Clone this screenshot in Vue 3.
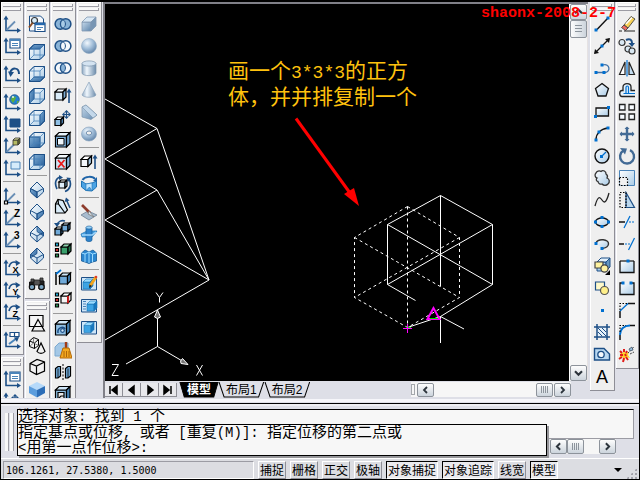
<script setup>
import { ref } from 'vue'

const NAVY = '#1d4f86'
const MID = '#4a84ba'
const BLUE = '#0070d0'

const p = (d, fill = 'none', stroke = '#000', w = 1.2, extra = '') =>
  `<path d="${d}" fill="${fill}" stroke="${stroke}" stroke-width="${w}" ${extra}/>`
const c = (x, y, r, fill = 'none', stroke = '#000', w = 1.2) =>
  `<circle cx="${x}" cy="${y}" r="${r}" fill="${fill}" stroke="${stroke}" stroke-width="${w}"/>`
const e = (x, y, rx, ry, fill = 'none', stroke = '#000', w = 1.2) =>
  `<ellipse cx="${x}" cy="${y}" rx="${rx}" ry="${ry}" fill="${fill}" stroke="${stroke}" stroke-width="${w}"/>`
const dot = (x, y) => `<rect x="${x - 1.5}" y="${y - 1.5}" width="3" height="3" fill="${BLUE}"/>`

// UCS tripod shared by the first column
const axes =
  p('M3 3V15.500H15', 'none', NAVY, 1.6) +
  p('M.5 4.5L3 .5L5.500 4.500ZM14 13L18 15.500L14 18Z', NAVY, 'none')
const ray = p('M3.500 15L12 6.500', 'none', '#6a8fb5', 1.8)

function cube(x, y, s, d, front, top, side, stroke = '#000', w = 1.2) {
  return (
    p(`M${x} ${y + d}h${s}v${s}h${-s}z`, front, stroke, w) +
    p(`M${x} ${y + d}l${d} ${-d}h${s}l${-d} ${d}z`, top, stroke, w) +
    p(`M${x + s} ${y + d}l${d} ${-d}v${s}l${-d} ${d}z`, side, stroke, w)
  )
}

const wire = (face) =>
  p('M1.500 6L6 1.500H16.500V12L12 16.500H1.500Z', 'url(#glass)', MID, 1) +
  p(face, 'url(#deep)', NAVY, 1) +
  p('M1.500 6H12V16.500M12 6L16.500 1.500M6 1.500V12H16.500M6 12L1.500 16.500', 'none', MID, 0.8) +
  p('M1.500 6L6 1.500H16.500V12L12 16.500H1.500Z', 'none', NAVY, 1)

const iso = (face) =>
  p('M9 1L15.500 7.500V11L9 17L2.500 11V7.500Z', 'url(#glass)', NAVY, 1) +
  p(face, 'url(#deep)', NAVY, 0.8) +
  p('M2.500 7.500L9 11L15.500 7.500M9 11V17', 'none', NAVY, 1)

const swatches =
  p('M1.500 2h3v3h-3z', '#20b8e8') + p('M1.500 7.500h3v3h-3z', '#e03030') + p('M1.500 13h3v3h-3z', '#30a060')
const letter = (t) => `<text x="11" y="8" font-family="Liberation Sans" font-size="10" font-weight="bold">${t}</text>`
const small = (t) => `<text x="9.500" y="13.500" font-family="Liberation Sans" font-size="9" font-weight="bold">${t}</text>`
const turn = p('M6 8C7 3 11 2 14 4', 'none', NAVY, 1.6) + p('M12.500 1L17.500 4L13 7Z', NAVY, 'none')
const venn = (l, r, m) =>
  c(6.3, 9, 5.2, l, NAVY, 1.5) + c(11.7, 9, 5.2, r, NAVY, 1.5) +
  p('M9 4.600A5.200 5.200 0 0 1 9 13.400A5.200 5.200 0 0 1 9 4.600', m, NAVY, 1)
const cross4 = (x, y, r, w, col) =>
  p(`M${x - r} ${y}H${x + r}M${x} ${y - r}V${y + r}`, 'none', col, w) +
  p(
    `M${x - r - 1} ${y}l2.500 -2.500v5zM${x + r + 1} ${y}l-2.500 -2.500v5zM${x} ${y - r - 1}l-2.500 2.500h5zM${x} ${y + r + 1}l-2.500 -2.500h5z`,
    col, 'none'
  )
const frame = p('M1.500 2.500h15v12.500h-15z', '#cfe6f8', NAVY, 1)
const aqua = (x, y, s, d) => cube(x, y, s, d, '#3da4e4', '#9bdcff', '#1878c0', '#1873b4', 0.6)

const icons = {
  ucs: axes + ray,
  named: axes + p('M7 2h10v9H7z', '#fff', NAVY) + p('M7 3H17', 'none', MID, 2) + p('M9 6.500h6M9 8.500h6', 'none', MID, 1),
  prev: axes + p('M7 8C9 2 16 2 16 9', 'none', NAVY, 2) + p('M5 6.500L11 7L7.500 12Z', NAVY, 'none'),
  world: axes + c(11.5, 6.5, 4.8, '#2482cc', NAVY, 0.8) + p('M9 3l4 1l-1 3l-2 3l-2-3zM14 8l2 0l-2 3z', '#5fae3c', 'none') + c(10, 4, 1, '#e8f6ff', 'none'),
  object: axes + p('M7 4h10v8H7z', NAVY, NAVY, 1),
  face: axes + ray + cube(10, 1, 5, 2, '#b4ba63', '#e0e29a', '#6c7130', '#333', 0.8),
  view: axes + p('M8 3h9v7H8z', '#d5ebfb', MID, 1),
  origin: axes + ray + p('M1.500 14h3v3h-3z', '#fff'),
  zaxis: axes + ray + letter('Z'),
  three: axes + ray + letter('3'),
  rx: axes + turn + small('X'),
  ry: axes + turn + small('Y'),
  rz: axes + turn + small('Z'),
  apply: axes + p('M7 1.500h9v4H7zM11.500 1.500v4', '#fff', NAVY, 1.2) + p('M6 13L14 7', 'none', MID, 2) + p('M11 6.500L16 6L14 11Z', NAVY, 'none'),
  moveucs: axes + cross4(12, 6, 3, 1.2, NAVY),

  viewmgr: p('M1.500 1h11l3 3v12h-14z', '#f3f7fc', NAVY, 1) + c(6.5, 5.5, 3, '#d7ecfb', '#333') + p('M4.500 8L1 12.500', 'none', '#8b4b22', 2) + p('M7 8h10v8.500H7z', '#fff', NAVY) + p('M7 9H17', 'none', '#2467ac', 2.4) + p('M9 12.500h6M9 14.500h4', 'none', MID, 1),
  top: wire('M1.500 6L6 1.500H16.500L12 6Z'),
  bottom: wire('M1.500 16.500L6 12H16.500L12 16.500Z'),
  left: wire('M1.500 6L6 1.500V12L1.500 16.500Z'),
  right: wire('M12 6L16.500 1.500V12L12 16.500Z'),
  front: wire('M1.500 6H12V16.500H1.500Z'),
  back: wire('M6 1.500H16.500V12H6Z'),
  sw: iso('M2.500 7.500L9 11V17L2.500 11Z'),
  se: iso('M15.500 7.500L9 11V17L15.500 11Z'),
  ne: iso('M9 1L15.500 7.500V11L9 6.500Z'),
  nw: iso('M9 1L2.500 7.500V11L9 6.500Z'),
  camera: p('M1.500 7h5v7h-5zM11 6h5v8h-5z', '#222', '#111', 1) + p('M6 5h6v5H6zM3 4h3v3H3zM12 3h3v3h-3z', '#555', '#222', 0.8) + c(4, 12, 2.7, '#7ca6c4', '#111') + c(13.5, 12, 2.7, '#7ca6c4', '#111'),
  wire2d: p('M1.500 1.500h13.500v11H1.500z', '#f6f6f6') + p('M10 5.500L16.500 17H4Z'),
  wire3d: p('M1.500 5l4-3.500l5 2v6l-4 3l-5-2zM1.500 5l5 2l4-3.500M6.500 7v5.500', 'none', '#000', 1) + p('M5.500 1.500v5.500l-4 3.500M5.500 7l5 2.500', 'none', '#555', 0.7) + p('M13 7L9 15.500C11 18 15 18 17 15.500Z', '#f2f2f2'),
  hidden: p('M2 5.500L9 1.500L16.500 4V13L8.500 16.500L2 13ZM2 5.500L8.500 8L16.500 4M8.500 8V16.500', '#f2f2f2'),
  shaded: p('M1 6L9 2L17 6L9 10Z', '#b6dafa', 'none') + p('M1 6L9 10V17.500L1 13Z', '#5b9ddd', 'none') + p('M17 6L9 10V17.500L17 13Z', '#2d6eb7', 'none'),

  union: venn('#8ab4d8', '#8ab4d8', '#a8cbe6'),
  subtract: venn('#8ab4d8', '#f4f8fc', '#f4f8fc'),
  intersect: venn('#f4f8fc', '#f4f8fc', '#8ab4d8'),
  extface: cube(1, 2, 8, 3, '#d9ebf8', '#f5faff', '#7dadd4') + p('M15 16V4', 'none', NAVY, 1.6) + p('M12.500 5.500L15 1.500L17.500 5.500Z', NAVY, 'none'),
  movface: cube(1, 8, 6, 2.5, '#8fbfe4', '#f5faff', '#5088b8') + cross4(12.5, 5.5, 3.5, 1.2, NAVY),
  offface: cube(1.5, 1.5, 11, 3.5, '#7fb0da', '#e8f4fc', '#6fa1cb') + p('M3.500 7.500h6.500v6.500H3.500z', '#eef6fc', '#000', 1),
  delface: cube(1.5, 1.5, 11, 3.5, '#cfe3f2', '#f3f9fd', '#83b0d4') + p('M4 7L10.500 14.500M10.500 7L4 14.500', 'none', '#e81818', 1.8),
  rotface: cube(5, 5, 6, 2, '#dfeefa', '#fff', '#8fbfe4') + p('M3 14C0 8 2 3 6 2M15 4C18 9 16 15 11 16.500', 'none', NAVY, 1.7) + p('M5 0L9 2.500L5 5ZM17 3L12.500 2.500L14 7Z', NAVY, 'none'),
  tapface: p('M1.500 16V7L4 2.500L9 3.500L13.500 13L11 16Z', '#d9ebf8') + p('M4 2.500L4.500 7L11 16M1.500 7H4.500') + p('M16 11L12.500 3', 'none', NAVY, 1.6) + p('M10.500 5L12 .5L15.500 3.500Z', NAVY, 'none'),
  copface: cube(1, 8, 6, 2, '#6fa9d8', '#fff', '#4380b3') + cube(8, 4, 6, 2, '#6fa9d8', '#cfe6f8', '#4380b3') + p('M3 6C4 2 8 1 11 2', 'none', NAVY, 1.6) + p('M0 4L3 8L6 4Z', NAVY, 'none'),
  colface: swatches + cube(7, 3, 7, 3, '#39a06c', '#8cd0ad', '#207348'),
  copedge: p('M2 3V16', 'none', '#000', 1.5) + p('M2 5L7 1', 'none', BLUE, 1.8) + cube(5.5, 4, 8, 3, '#6fa9d8', '#cfe6f8', '#4380b3'),
  coledge: swatches + cube(7, 2, 7, 3, '#f4f4f4', '#fff', '#e4e4e4') + p('M14 5V12', 'none', '#e81818', 1.6),
  imprint: cube(1.5, 1.5, 11, 3.5, '#8fbfe4', '#cfe6f8', '#4380b3') + p('M4 14C3 8 10 7 11 10', 'none', NAVY, 1.5) + c(8.5, 11.5, 1.8, '#cfe6f8', NAVY),
  clean: p('M1 6L5 2H14V15H1Z', '#a4c8e6', '#7ca9cf', 1) + p('M12 1v7', 'none', '#a23c16', 2.4) + p('M9 7h6l3 10H6Z', '#f3a820', '#b36808', 1) + p('M10 10v6M12.500 10v6M15 10v6', 'none', '#9b5604', 0.8),
  separate: p('M1.500 5.500L4 3.500H6.500V13L4 15H1.500ZM11.500 5.500L14 3.500H16.500V13L14 15H11.500Z', '#73addc') + p('M4 5.500V15M14 5.500V15', 'none', '#000', 0.8) + p('M9 1V17', 'none', '#000', 1, 'stroke-dasharray="2 1.500"'),
  shell: cube(1.5, 1.5, 11, 3.5, '#8fbfe4', '#cfe6f8', '#4380b3') + p('M4 7.500h6V14H4z', '#e8e8e8') + p('M4 14l3-3h3', 'none'),

  box: cube(2, 2, 9, 5, 'url(#steel)', '#d8e7f4', '#7896b4', '#8198b1', 0.8),
  sphere: c(9, 9, 7.5, 'url(#ball)', '#8fa9c2', 0.6),
  cylinder: p('M2 4.500V14C2 17.500 16 17.500 16 14V4.500Z', 'url(#tube)', '#7d95ad', 0.7) + e(9, 4.500, 7, 2.6, '#d4e3f1', '#7d95ad', 0.7),
  cone: p('M9 1L2 14C4 17 14 17 16 14Z', 'url(#tube)', '#8aa2ba', 0.7),
  wedge: p('M2 4L6 2L17 12L11 16.500L2 14Z', 'url(#steel)', '#7b93ab', 0.7) + p('M6 2L17 12L13 15L2 4Z', '#c4d8ea', '#7b93ab', 0.6),
  torus: e(9, 9, 7.5, 7, 'url(#ball)', '#8ba5be', 0.7) + e(9, 8, 2.8, 2, '#efefef', '#6787a8', 0.9),
  extrude: cube(1, 3, 7, 3.5, '#f3f7fb', '#fff', '#a4c8e6') + p('M15 16V4', 'none', NAVY, 1.6) + p('M12.500 5.500L15 1.500L17.500 5.500Z', NAVY, 'none'),
  revolve: p('M1.500 6L6 9L12 8L16.500 6V12L12 16L6 15.500L1.500 12Z', '#4ba3e4', '#1e72b4', 1) + p('M6 9V15.500L9.500 12L12 16V8Z', '#c2e6ff', '#1e72b4', 0.6) + p('M2.500 5C5 1 13 1 15 4', 'none', '#1e64a8', 2) + p('M13 6L17 6.500L17 2Z', '#1e64a8', 'none'),
  slice: p('M1 12L8 8L17 12L9 17Z', '#a8bccf', '#6f8294', 0.8) + p('M2 2L10 10', 'none', '#8e3c2c', 2.6) + p('M9 8L14 14L8 11Z', '#e3e8ec', '#777', 0.8),
  section: p('M1 9L7 6H17L12 12H2Z', '#4ba3e4', '#1e72b4', 0.7) + p('M6 2.500V15C6 17 12 17 12 15V2.500Z', '#2d83cc', '#195b97', 0.7) + e(9, 2.500, 3, 1.5, '#99d4fa', '#195b97', 0.6) + p('M2 10H12L16 7', 'none', '#9fd6fb', 1.4),
  interfere: p('M1.500 6L5 3L9 5L13 3L16.500 6V14L12.500 15L9 16.500L5 15L1.500 14Z', '#2b86d0', '#155a96', 0.8) + p('M1.500 6L5 7V15M5 7L9 5V16M9 5L12.500 7V15M12.500 7L16.500 6', 'none', '#9eddff', 1),
  setdraw: frame + aqua(3, 4, 7, 3) + p('M10 11L16 2', 'none', '#f2a51d', 3) + p('M9 13L9.500 9.500L12 11Z', '#222', 'none') + c(16, 2, 1.3, '#e03c2c', 'none'),
  setview: frame + p('M3 4.500h3M3 7h3M3 9.500h3M3 12h3', 'none', MID, 1) + aqua(7, 4, 7, 3),
  setprof: frame + aqua(4, 3.5, 7, 3),

  line: p('M4 14.500L14.500 3.500', 'none', '#111', 1.4) + dot(3, 15) + dot(15, 3),
  xline: p('M2 16L16 2', 'none', '#111', 1.3) + p('M1 17L2 12L6 16ZM17 1L16 6L12 2Z', '#111', 'none') + dot(9, 9),
  pline: p('M2.500 13.500H11M10 6C17 4 18 13 12 13.500', 'none', '#3f72a8', 1.3) + dot(3, 13.5) + dot(11, 13.5) + dot(9, 6),
  polygon: p('M9 2.500L15.500 7.500L13 15H5L2.500 7.500Z', 'url(#glass)', '#111', 1.3),
  rect: p('M3 5H15.500V13H3Z', 'url(#glass)', '#111', 1.3) + dot(2.5, 13.5) + dot(15.5, 4.5),
  arc: p('M3 15C3 9 7 4 15 3', 'none', '#111', 1.4) + dot(3, 15) + dot(6, 7) + dot(15, 3),
  circle: c(9, 9, 7, 'url(#glass)', '#111', 1.4) + p('M8 10L13 5', 'none', BLUE, 1.3) + dot(8.5, 9.5),
  cloud: p('M4 9A3 3 0 0 1 3 4A3.500 3.500 0 0 1 8 2.500A3 3 0 0 1 13 5A3 3 0 0 1 14 9A3.500 3.500 0 0 1 15 15A4 4 0 0 1 9 15A3 3 0 0 1 5 12.500A2 2 0 0 1 4 9Z', 'url(#glass)', '#333', 1.3),
  spline: p('M2 15C5 4 7 6 9 9S13 13 16 2', 'none', '#222', 1.3),
  ellipse: e(9, 9, 6.5, 4, 'url(#glass)', '#111', 1.3) + dot(2.5, 9) + dot(15.5, 9) + dot(9, 4.5) + dot(9, 13.5),
  earc: p('M3 8C5 3 16 4 15.500 9C15 13 12 13 9 13.500', 'url(#glass)', '#333', 1.4) + dot(3, 8.5) + dot(9, 13.5),
  insert: cube(4, 1, 9, 4, '#a5cbe9', '#e2f0fb', '#6797c0', NAVY, 1) + p('M2 5h8v6H2z', '#fff3a0', '#444') + c(11.5, 11.5, 3.6, '#fff3a0', '#444') + p('M17 13v5h-5z', '#000', 'none'),
  block: p('M2.500 3h9v8h-9z', '#fff9c9', NAVY) + c(11.5, 11.5, 4, '#fff08a', '#555'),
  point: dot(9.5, 9.5),
  hatch: p('M4 1V17M14 1V17M1 4H17M1 14H17', 'none', NAVY, 1.5) + p('M5 5h8v8H5z', '#e6f1fa', 'none') + p('M5 9l4 4M5 5l8 8M9 5l4 4', 'none', NAVY, 1),
  region: p('M1.500 3.500H11L16.500 9V15H1.500Z', '#b9d8f1', NAVY, 1.4) + c(8, 9.5, 3.2, '#f4f8fc', NAVY, 1.3),
  text: '<text x="3" y="15.500" font-family="Liberation Sans" font-size="18" fill="#000">A</text>',

  erase: p('M6 10L13 1.500L17 4L10 13Z', '#f7d155', '#444', 0.9) + p('M6 10L10 13L7.500 15.500L3.500 12.500Z', '#ee6a5f', '#444', 0.9) + p('M8 9L14 2.500', 'none', '#fff', 1.4) + p('M1 16H4M6 16H17', 'none', '#222', 1.2),
  copy: c(4, 5.5, 3, '#d9e8f3', '#333') + c(10, 12, 3, '#d9e8f3', '#333') + c(14, 14, 3, '#d9e8f3', '#333') + p('M8 3C12 1 14 3 14 6', 'none', NAVY, 2) + p('M10.500 6H17L14 10Z', NAVY, 'none'),
  mirror: p('M7 3V15.500H1.500Z', '#fff', '#222') + p('M11 3V15.500H16.500Z', '#c3dcf0', '#222') + p('M9 1V17.500', 'none', BLUE, 1.2),
  offset: p('M17 15.500H4C1 15.500 1 9.500 4 9.500H5V6C5 1.500 13 1.500 13 6V9.500H17', '#e6f1fa', '#222', 1.3) + p('M17 12.500H5.500M8 12V6.500C8 4.500 10.500 4.500 10.500 6.500V12', 'none', BLUE, 1.2),
  array: p('M1.500 1.500h5.500v5.500h-5.500zM11 1.500h5.500v5.500H11zM1.500 11h5.500v5.500h-5.500zM11 11h5.500v5.500H11z', '#f7fbff', '#222', 1.3),
  move: cross4(9, 9, 6.5, 2.4, '#426a95'),
  rotate: p('M5.500 3.500A7 7 0 1 0 12 3.200', 'none', '#426a95', 2.4) + p('M2 1L9 1.500L7 7.500Z', '#426a95', 'none'),
  scale: p('M1.500 1.500h15v15h-15z', 'url(#glass)', MID, 1) + p('M1.500 8.500h8v8h-8z', '#f2f2f2', '#000', 1.2, 'stroke-dasharray="1.500 1.500"'),
  stretch: p('M8 1.500L16.500 16.500H8Z', '#bcd8ee', NAVY) + p('M2 1.500h6v15H2z', 'none', '#000', 1.2, 'stroke-dasharray="1.500 1.500"'),
  trim: p('M1 9H7', 'none', '#111', 1.5) + p('M6 15L12 3', 'none', BLUE, 1.2) + p('M11 9H17', 'none', BLUE, 1.2, 'stroke-dasharray="2 1"'),
  extend: p('M1 9H6', 'none', '#111', 1.5) + p('M7 9H12', 'none', BLUE, 1.2, 'stroke-dasharray="2 1"') + p('M10.500 15L16.500 3', 'none', BLUE, 1.3),
  breakpt: p('M2 4V15.500H16V4', 'url(#glass)', '#111', 1.3) + p('M2 4H16', 'none', '#111', 1.2) + dot(10, 4),
  breaks: p('M5 4H2V15.500H16V4H13', 'url(#glass)', '#111', 1.3) + dot(5, 4) + dot(13, 4),
  chamfer: p('M2 17V10M10 2.500H17', 'none', '#111', 1.5) + p('M2 10L10 2.500', 'none', BLUE, 1.4) + p('M2 9V2.500H9', 'none', '#000', 1.1, 'stroke-dasharray="1.500 1.500"'),
  fillet: p('M2 17V12M12 2.500H17', 'none', '#111', 1.5) + p('M2 12C2 6 6 2.500 12 2.500', 'none', BLUE, 1.8) + p('M2 9V2.500H8', 'none', '#000', 1.1, 'stroke-dasharray="1.500 1.500"'),
  explode: p('M2 7l3 1l1-3l2 3l3-1l-1 3l2 3l-4-1l-2 4l-1-4l-4 1l2-3z', '#ffd225', 'none') + p('M2 6l2 2M6 4v3M9 6l-1 2M2 10h3M1 14l3-2M5 17l1-4M10 15l-2-3M7 9l1 2', 'none', '#e01c1c', 2) + p('M10 8L16 2M12 9L16 7', 'none', '#444', 1, 'stroke-dasharray="2 1"') + p('M11 4l3-2l1 3l-3 1z', '#97bcd9', '#345', 0.7),
}

const bars = (s) => s.split('/').map((bar) => bar.trim().split(/\s+/))
const leftDock = [
  bars('ucs named - prev - world object face view - origin zaxis three - rx ry rz - apply / named moveucs'),
  bars('viewmgr - top bottom left right front back - sw se ne nw - camera / wire2d wire3d hidden shaded'),
  bars('union subtract intersect - extface movface offface delface rotface tapface copface colface - copedge coledge - imprint clean separate shell'),
  bars('box sphere cylinder cone wedge torus - extrude revolve - slice section interfere - setdraw setview setprof'),
]
const rightDock = [
  bars('line xline pline polygon rect arc circle cloud spline ellipse earc insert block point hatch region text'),
  bars('erase copy mirror offset array move rotate scale stretch trim extend breakpt breaks chamfer fillet explode'),
]
const docks = { left: leftDock, right: rightDock }

const arrows = {
  first: 'M5 3v8M12 3v8L7 7z',
  prev: 'M11 3v8L6 7z',
  next: 'M7 3v8l5-4z',
  last: 'M12 3v8M5 3v8l5-4z',
}
const chevrons = { up: 'M4 9.500L8 5.500L12 9.500', down: 'M4 6L8 10L12 6', left: 'M10 4L6 8L10 12', right: 'M6 4L10 8L6 12' }

const tabs = ['模型', '布局1', '布局2']
const activeTab = ref(0)

const modes = ref([
  { label: '捕捉', on: false },
  { label: '栅格', on: false },
  { label: '正交', on: false },
  { label: '极轴', on: false },
  { label: '对象捕捉', on: true },
  { label: '对象追踪', on: true },
  { label: '线宽', on: false },
  { label: '模型', on: true },
])

// Splits a line into full-width and half-width runs
const runs = (s) => s.match(/[\x20-\x7e]+|[^\x20-\x7e]+/g).map((t) => ({ t, half: /^[\x20-\x7e]/.test(t) }))
const history = runs('选择对象: 找到 1 个')
const prompt = [runs('指定基点或位移, 或者 [重复(M)]: 指定位移的第二点或'), runs('<用第一点作位移>:')]
const note = [runs('画一个3*3*3的正方'), runs('体，并并排复制一个')]
const command = ref('')
</script>

<template>
  <div class="app">
    <svg class="defs" aria-hidden="true">
      <defs>
        <linearGradient id="steel" x1="0" y1="0" x2="1" y2="1"><stop offset="0" stop-color="#c6d9ea" /><stop offset="1" stop-color="#5f86ad" /></linearGradient>
        <linearGradient id="tube"><stop offset="0" stop-color="#8fa9c3" /><stop offset=".35" stop-color="#f0f7fd" /><stop offset="1" stop-color="#6b8bab" /></linearGradient>
        <linearGradient id="glass" x1="0" y1="0" x2="1" y2="1"><stop offset="0" stop-color="#ffffff" /><stop offset="1" stop-color="#a9cbe6" /></linearGradient>
        <linearGradient id="deep" x1="0" y1="0" x2="1" y2="1"><stop offset="0" stop-color="#7fadd5" /><stop offset="1" stop-color="#2b629c" /></linearGradient>
        <radialGradient id="ball" cx=".38" cy=".3" r=".75"><stop offset="0" stop-color="#f2f8fd" /><stop offset=".5" stop-color="#a3bfda" /><stop offset="1" stop-color="#5d80a5" /></radialGradient>
      </defs>
    </svg>

    <main class="work">
      <template v-for="(columns, side) in docks" :key="side">
        <div class="dock" :class="side">
          <div v-for="(column, i) in columns" :key="i" class="column">
            <div v-for="(bar, j) in column" :key="j" class="toolbar" role="toolbar">
              <div class="grip"><i></i><i></i></div>
              <template v-for="(name, k) in bar" :key="k">
                <hr v-if="name === '-'" />
                <button v-else type="button" class="tool" :aria-label="name">
                  <svg width="18" height="18" viewBox="0 0 18 18" v-html="icons[name]"></svg>
                </button>
              </template>
            </div>
          </div>
        </div>
      </template>

      <section class="view">
        <div class="canvas">
          <svg class="drawing" aria-hidden="true">
            <g transform="translate(-105 -4)" fill="none" stroke="#fff" stroke-width="1">
              <path d="M105 99L157 128.500L105 159L157 190L209 280M157 128.500L209 280M157 190L105 220L209 280L105 340" />
              <path d="M440.500 195.500L387.500 224.500V284.500L415.500 300.500M440.500 195.500L492.500 224.500V284.500L440.500 316.500M387.500 224.500L492.500 284.500M492.500 224.500L387.500 284.500M440.500 195.500V286.500M440.500 316.500V343M440.500 316.500L464 329M440.500 316.500L407.500 327.500" />
              <path stroke-dasharray="3 3" d="M407.500 206.500L354.500 237.500V297.500L407.500 327.500M407.500 206.500L459.500 237.500V297.500L407.500 327.500M354.500 237.500L459.500 297.500M459.500 237.500L354.500 297.500M407.500 206.500V327.500" />
              <path stroke="#ff00ff" stroke-width="2" d="M433.500 308L427.500 319H439.500Z" />
              <path stroke="#00e000" d="M430 318.500H438M406 327.500H411" />
              <path stroke="#ff00ff" d="M403 328.500H412M407.500 324V333" />
              <path stroke="#ff0000" stroke-width="3" d="M296 118.500L350 193" />
              <path fill="#ff0000" stroke="none" d="M359 206L344 194L354 188Z" />
              <path d="M157.500 312V346.500L126 364M157.500 346.500L184 362" />
              <path fill="#777" d="M157.500 310L154.500 317Q157.500 320 160.500 317ZM188 364.500L181 363.500Q179.500 361 182.500 358.500Z" />
              <path d="M156 292.500L159.500 297.500L163 292.500M159.500 297.500V302.500M196.500 365L202.500 375.500M202.500 365L196.500 375.500M112 364.500H118.500L112 375.500H118.500" />
            </g>
          </svg>
          <p class="note">
            <span v-for="(line, i) in note" :key="i" class="row"><span v-for="(r, k) in line" :key="k" :class="{ half: r.half }">{{ r.t }}</span></span>
          </p>
        </div>
        <div class="vscroll">
          <button type="button" class="sb" aria-label="up"><svg viewBox="0 0 16 16"><path :d="chevrons.up" /></svg></button>
          <span class="thumb tall"></span>
          <button type="button" class="sb end" aria-label="down"><svg viewBox="0 0 16 16"><path :d="chevrons.down" /></svg></button>
        </div>
        <div class="bottom">
          <nav class="steps">
            <button v-for="(d, name) in arrows" :key="name" type="button" :aria-label="name">
              <svg width="17" height="14" viewBox="0 0 17 14"><path :d="d" stroke="#000" stroke-width="1.5" /></svg>
            </button>
          </nav>
          <div class="tabs" role="tablist">
            <button v-for="(t, i) in tabs" :key="t" type="button" role="tab" class="tab" :class="{ active: i === activeTab }" :aria-selected="i === activeTab" @click="activeTab = i">
              <svg viewBox="0 0 46 15" preserveAspectRatio="none"><path d="M1 0L6 14H40L45 0" /></svg>
              <span>{{ t }}</span>
            </button>
          </div>
          <div class="hscroll">
            <i class="split"></i>
            <button type="button" class="sb" aria-label="left"><svg viewBox="0 0 16 16"><path :d="chevrons.left" /></svg></button>
            <span class="thumb wide"></span>
            <button type="button" class="sb" aria-label="right"><svg viewBox="0 0 16 16"><path :d="chevrons.right" /></svg></button>
          </div>
        </div>
        <div class="stamp">shaonx-2008-2-7</div>
      </section>
    </main>

    <section class="command">
      <div class="grips"><i></i><i></i></div>
      <div class="console">
        <div class="history"><span v-for="(r, k) in history" :key="k" :class="{ half: r.half }">{{ r.t }}</span></div>
        <div class="console-scroll">
          <button type="button" class="sb" aria-label="left"><svg viewBox="0 0 16 16"><path :d="chevrons.left" /></svg></button>
          <span class="thumb wide"></span>
          <button type="button" class="sb end" aria-label="right"><svg viewBox="0 0 16 16"><path :d="chevrons.right" /></svg></button>
        </div>
        <label class="prompt">
          <span class="row"><span v-for="(r, k) in prompt[0]" :key="k" :class="{ half: r.half }">{{ r.t }}</span></span>
          <span class="row"><span v-for="(r, k) in prompt[1]" :key="k" :class="{ half: r.half }">{{ r.t }}</span><input v-model="command" type="text" /></span>
        </label>
      </div>
    </section>

    <footer class="status">
      <output class="coords">106.1261, 27.5380, 1.5000</output>
      <button v-for="(m, i) in modes" :key="i" type="button" class="mode" :class="{ on: m.on }" :aria-pressed="m.on" @click="m.on = !m.on">{{ m.label }}</button>
      <i class="caret"></i>
      <i class="corner"></i>
    </footer>
  </div>
</template>

<style>
body {
  margin: 0;
  background: #000;
}
</style>

<style scoped>
.app {
  box-sizing: border-box;
  height: 100vh;
  display: flex;
  flex-direction: column;
  border: 1px solid #000;
  border-top-width: 2px;
  background: #dedfe7;
  font-family: 'Liberation Sans', 'Noto Sans CJK SC', sans-serif;
  font-size: 12px;
  color: #000;
}
button {
  margin: 0;
  padding: 0;
  border: 0;
  background: none;
  font: inherit;
  color: inherit;
}
.defs {
  position: absolute;
  width: 0;
  height: 0;
}
.work {
  flex: 1 1 0;
  min-height: 0;
  display: flex;
  overflow: hidden;
}
.dock {
  display: flex;
  gap: 1px;
  flex: none;
}
.dock.left {
  order: 0;
  margin-right: 1px;
}
.dock.right {
  order: 2;
  margin-left: 2px;
}
.column {
  width: 25px;
  display: flex;
  flex-direction: column;
  gap: 2px;
}
.left .column:first-child,
.right .column:last-child {
  width: 23px;
}
.toolbar {
  box-sizing: border-box;
  flex: none;
  display: flex;
  flex-direction: column;
  padding: 0 0 3px;
  background: #efefef;
  border-right: 1px solid #8e8e96;
  border-bottom: 1px solid #8e8e96;
  box-shadow: inset 1px 1px #fff;
}
.grip {
  height: 9px;
  padding: 2px 2px 0;
  display: flex;
  flex-direction: column;
  gap: 1px;
}
.grip i {
  box-sizing: border-box;
  height: 3px;
  background: #f8f8f8;
  border-bottom: 1px solid #9c9ca4;
  border-right: 1px solid #9c9ca4;
}
.tool {
  height: 22px;
  display: flex;
  align-items: center;
  justify-content: center;
}
.tool svg {
  display: block;
  flex: none;
}
hr {
  box-sizing: border-box;
  width: 100%;
  height: 6px;
  margin: 0;
  border: 2px solid transparent;
  border-width: 2px 2px 3px;
  background: #9a9a9a;
  background-clip: padding-box;
}
.view {
  order: 1;
  flex: 1;
  min-width: 0;
  position: relative;
  display: grid;
  grid-template-columns: 1fr 19px;
  grid-template-rows: 1fr 17px;
  border-left: 2px solid #808088;
  border-top: 2px solid #808088;
}
.canvas {
  position: relative;
  overflow: hidden;
  background: #000;
}
.drawing {
  position: absolute;
  inset: 0;
  width: 100%;
  height: 100%;
}
.note {
  position: absolute;
  left: 123px;
  top: 56px;
  margin: 0;
  display: flex;
  flex-direction: column;
  color: #ffc20e;
  font-family: 'Liberation Mono', 'Noto Sans CJK SC', monospace;
  font-size: 21px;
  line-height: 26px;
}
.note .half {
  font-size: 18px;
}
.row {
  display: block;
  white-space: pre;
}
.stamp {
  position: absolute;
  right: -28px;
  top: 0;
  color: #f00;
  font-family: 'Liberation Mono', monospace;
  font-size: 15px;
  font-weight: bold;
  line-height: 20px;
  z-index: 2;
}
.vscroll {
  display: flex;
  flex-direction: column;
  background: #f6f6f6;
  border-left: 1px solid #fff;
  border-right: 1px solid #e6e2e2;
}
.sb,
.thumb {
  box-sizing: border-box;
  flex: none;
  width: 17px;
  height: 16px;
  display: block;
  border: 1px solid #8d939b;
  border-radius: 2px;
  background: linear-gradient(#fdfdfd, #ccd4dc);
}
.sb svg {
  display: block;
  width: 100%;
  height: 100%;
  fill: none;
  stroke: #2c343c;
  stroke-width: 2.4;
}
.thumb.tall {
  height: 18px;
  background: repeating-linear-gradient(#8c949c 0 1px, transparent 1px 3px) center / 7px 9px no-repeat, linear-gradient(90deg, #fdfdfd, #ccd4dc);
}
.thumb.wide {
  background: repeating-linear-gradient(90deg, #8c949c 0 1px, transparent 1px 2px) center / 7px 7px no-repeat, linear-gradient(#fdfdfd, #ccd4dc);
}
.end {
  margin-top: auto;
}
.bottom {
  grid-column: 1 / -1;
  display: flex;
  align-items: center;
}
.steps {
  display: flex;
}
.steps button {
  width: 18px;
  height: 14px;
  box-sizing: border-box;
  border-right: 1px solid #8e8e96;
  border-bottom: 1px solid #8e8e96;
  background: #e8e8ec;
}
.steps svg {
  display: block;
}
.tabs {
  display: flex;
  margin-left: 2px;
}
.tab {
  position: relative;
  padding: 0 8px;
  height: 16px;
  line-height: 16px;
  margin-right: -1px;
}
.tab svg {
  position: absolute;
  inset: 0;
  width: 100%;
  height: 100%;
  fill: #dedfe7;
  stroke: #000;
}
.tab span {
  position: relative;
}
.tab.active {
  color: #fff;
  font-weight: bold;
}
.tab.active svg {
  fill: #000;
}
.hscroll {
  width: 160px;
  height: 15px;
  margin-left: auto;
  margin-right: 17px;
  display: flex;
  align-items: center;
  background: #f6f6f6;
}
.split {
  width: 4px;
  height: 11px;
  margin-right: 2px;
  border: 1px solid #a4a8ac;
  box-sizing: border-box;
}
.hscroll .sb,
.hscroll .thumb {
  height: 14px;
}
.hscroll .thumb {
  margin-left: auto;
  margin-right: 1px;
}
.command {
  flex: none;
  display: flex;
  gap: 3px;
  padding: 5px 5px 4px 4px;
  border-top: 1px solid #000;
  box-shadow: 0 -1px #dedfe7, 0 -4px #f6f6fa, inset 0 2px #eeeef2;
  margin-top: 5px;
}
.grips {
  display: flex;
  gap: 1px;
  padding: 4px 0 3px;
}
.grips i {
  width: 3px;
  background: #f8f8f8;
  border-right: 1px solid #9c9ca4;
}
.console {
  flex: 1;
  min-width: 0;
  position: relative;
  font-family: 'Liberation Mono', 'Noto Sans CJK SC', monospace;
  font-size: 15px;
  line-height: 15px;
}
.console .half {
  font-size: 14px;
}
.history {
  height: 28px;
  line-height: 14px;
  white-space: pre;
  background: #f7f7f7;
  border: 1px solid #9c9ca4;
  border-top-color: #000;
  border-left-color: #000;
}
.console-scroll {
  width: 66px;
  height: 15px;
  margin: 0 18px 0 auto;
  display: flex;
  background: #f6f6f6;
}
.console-scroll .sb,
.console-scroll .thumb {
  height: 15px;
}
.console-scroll .end {
  margin-top: 0;
  margin-left: auto;
}
.prompt {
  position: absolute;
  left: 0;
  top: 15px;
  right: 87px;
  box-sizing: border-box;
  height: 32px;
  border: 1px solid #000;
  background: #f7f7f7;
  box-shadow: 2px 2px #96969a;
}
.prompt .row {
  height: 15px;
  line-height: 16px;
}
.prompt input {
  width: 60px;
  height: 12px;
  padding: 0;
  border: 0;
  background: none;
  outline: none;
}
.status {
  flex: none;
  display: flex;
  align-items: center;
  gap: 4px;
  padding: 1px 2px 0;
  height: 19px;
  border-top: 1px solid #fff;
  background: #dcdde2;
}
.coords {
  box-sizing: border-box;
  width: 251px;
  height: 18px;
  padding-left: 2px;
  line-height: 18px;
  font-family: 'DejaVu Sans Mono', monospace;
  font-size: 10px;
  border: 1px solid #9c9ca4;
  border-right-color: #fff;
  border-bottom-color: #fff;
}
.mode {
  box-sizing: border-box;
  height: 18px;
  padding: 0 1px;
  line-height: 18px;
  border: 1px solid #fff;
  border-right-color: #8e8e96;
  border-bottom-color: #8e8e96;
}
.mode.on {
  border-color: #000 #fff #fff #000;
  background: #eaeaee;
}
.caret {
  margin-left: auto;
  border: 4px solid transparent;
  border-top-color: #000;
  border-bottom: 0;
}
.corner {
  width: 11px;
  height: 11px;
  align-self: flex-end;
  background: radial-gradient(#a2a2aa 1px, transparent 1px) 0 0 / 4px 4px;
  clip-path: polygon(100% 0, 100% 100%, 0 100%);
}
</style>
